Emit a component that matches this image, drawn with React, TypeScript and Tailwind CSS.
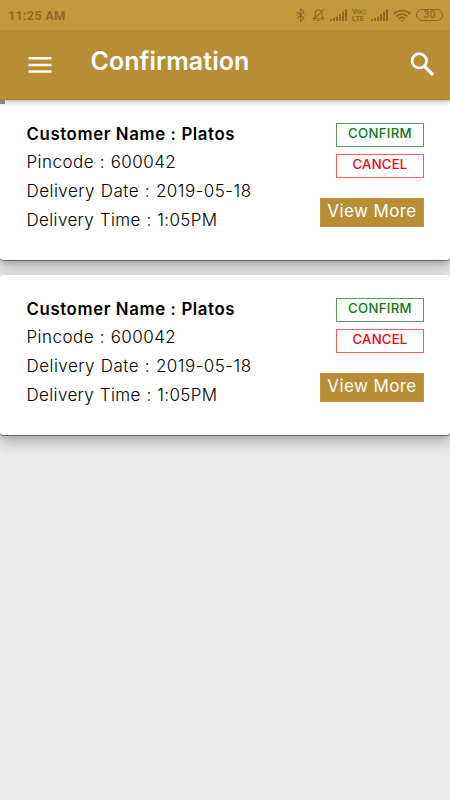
import React from "react";

function Signal() {
  return (
    <svg className="h-[12px] w-[17px]" viewBox="0 0 17 12" fill="currentColor">
      <path d="M0 10h2v2H0zM3 9h2v3H3zM6 7.5h2V12H6zM9 5h2v7H9zM12 2.5h2V12h-2zM15 0h2v12h-2z" />
    </svg>
  );
}

function StatusBar() {
  return (
    <div className="flex h-[30px] items-center justify-between bg-[#c3973b] pl-[8px] pr-[7px] text-[#8d6b27]">
      <span className="pt-px font-[family-name:Roboto] text-[13px] font-semibold tracking-[0.12px]">11:25 AM</span>
      <div className="flex h-[14px] items-center">
        <svg className="h-[14px] w-[10px]" viewBox="0 0 10 14" fill="none" stroke="currentColor" strokeWidth="1.2">
          <path d="M1 4l7 6.300-3.500 3V.8L8 3.900 1 10.200" />
          <path d="M.2 7h1M8.700 7h1" />
        </svg>
        <svg className="ml-[6px] h-[14px] w-[13px]" viewBox="0 0 14 14" fill="none" stroke="currentColor" strokeWidth="1.100">
          <path d="M2 11h10.500L10.700 8.500V5.200C10.700 3 9.200 1.600 7 1.600S3.400 3 3.400 5.200v3.300L1.600 11zM5.500 12.800h3M1 13.200L12.800.6" />
        </svg>
        <span className="ml-[5px] flex"><Signal /></span>
        <span className="ml-[5px] flex w-[14px] flex-col font-[family-name:Roboto] text-[7.500px] font-bold leading-[7px]">
          <span className="flex items-center whitespace-nowrap">
            Vo
            <svg className="h-[6px] w-[5px]" viewBox="0 0 5 6" fill="none" stroke="currentColor">
              <path d="M2 .5c-1.500 1.500-1.500 3.500 0 5M3.500.5c1 1 1 1.500 0 2M3.500 3.500c1 .5 1 1 0 2" />
            </svg>
          </span>
          <span>LTE</span>
        </span>
        <span className="ml-[5px] flex"><Signal /></span>
        <svg className="ml-[5px] h-[13px] w-[18px]" viewBox="0 0 18 13" fill="none" stroke="currentColor" strokeWidth="1.700">
          <path d="M.8 4.800c4.700-4.400 11.700-4.400 16.400 0M3.400 7.400c3.200-3 8-3 11.200 0M5.900 9.800c1.800-1.600 4.400-1.600 6.200 0" />
          <path d="M7 11.200h4l-2 1.800z" fill="currentColor" stroke="none" />
        </svg>
        <span className="ml-[5px] flex h-[12px] w-[27px] items-center justify-center rounded-full border border-current font-[family-name:Roboto] text-[10.5px] font-semibold leading-none">
          30
        </span>
      </div>
    </div>
  );
}

function Header() {
  return (
    <header className="relative z-10 shadow-[0_2px_5px_rgba(0,0,0,0.28)]">
      <StatusBar />
      <div className="flex h-[70px] items-start border-b border-[#b38417] bg-[#b88d35] text-white">
        <svg className="ml-[28px] mt-[27px] h-[17px] w-[24px] shrink-0" viewBox="0 0 24 17" fill="currentColor">
          <path d="M.5 0h23v2.600H.5zM.5 6.700h23v2.600H.5zM.5 13.200h23v2.600H.5z" />
        </svg>
        <h1 className="ml-[38.500px] mt-[14px] grow whitespace-nowrap text-[25px] font-semibold leading-[34px] tracking-[0.05px]">
          Confirmation
        </h1>
        <svg className="mr-[15px] mt-[22px] h-[25px] w-[25px] shrink-0" viewBox="0 0 25 25" fill="none" stroke="currentColor">
          <circle cx="9.300" cy="8.800" r="7.200" strokeWidth="2.700" />
          <path d="M14.500 14.300l8.700 8.700" strokeWidth="3.300" />
        </svg>
      </div>
    </header>
  );
}

function DeliveryCard() {
  return (
    <section className="flex h-[160px] justify-between rounded-[3px] bg-white pl-[26.5px] pr-[26px] shadow-[0_1px_0_rgba(0,0,0,0.4),0_7px_14px_rgba(0,0,0,0.26),0_2px_5px_rgba(0,0,0,0.12)]">
      <div className="whitespace-nowrap pt-[19.500px] text-[17px] font-light leading-[28.900px] text-black">
        <p className="text-[16.800px] font-semibold tracking-[0.62px]">Customer Name : Platos</p>
        <p className="tracking-[0.45px] [word-spacing:0.5px]">Pincode : 600042</p>
        <p className="tracking-[0.46px] [word-spacing:0.6px]">Delivery Date : 2019-05-18</p>
        <p className="tracking-[0.35px] [word-spacing:0.6px]">Delivery Time : 1:05PM</p>
      </div>
      <div className="flex flex-col items-end pt-[23px]">
        <button className="h-[24px] w-[88px] border border-[#5b9e5b] pb-[3px] text-[13.200px] font-medium leading-[19px] tracking-[0.3px] text-[#0a7a12]">
          CONFIRM
        </button>
        <button className="mt-[7px] h-[24px] w-[88px] border border-[#ff5c5c] pb-[3px] text-[13.200px] font-medium leading-[19px] tracking-[0.2px] text-[#fa0008]">
          CANCEL
        </button>
        <button className="mt-[20px] h-[29px] w-[104px] whitespace-nowrap border border-[#bd9439] bg-[#b88d35] pb-[3px] text-[17px] leading-[24px] tracking-[0.4px] text-white">
          View More
        </button>
      </div>
    </section>
  );
}

export default function App() {
  return (
    <div className="h-[800px] w-[450px] overflow-hidden bg-[#eaeaea] font-['Inter','Liberation_Sans',sans-serif]">
      <Header />
      <main className="relative flex flex-col gap-[15px]">
        <DeliveryCard />
        <DeliveryCard />
        <span className="absolute left-0 top-0 z-20 h-[4px] w-[5px] bg-[#858585]" />
      </main>
    </div>
  );
}
